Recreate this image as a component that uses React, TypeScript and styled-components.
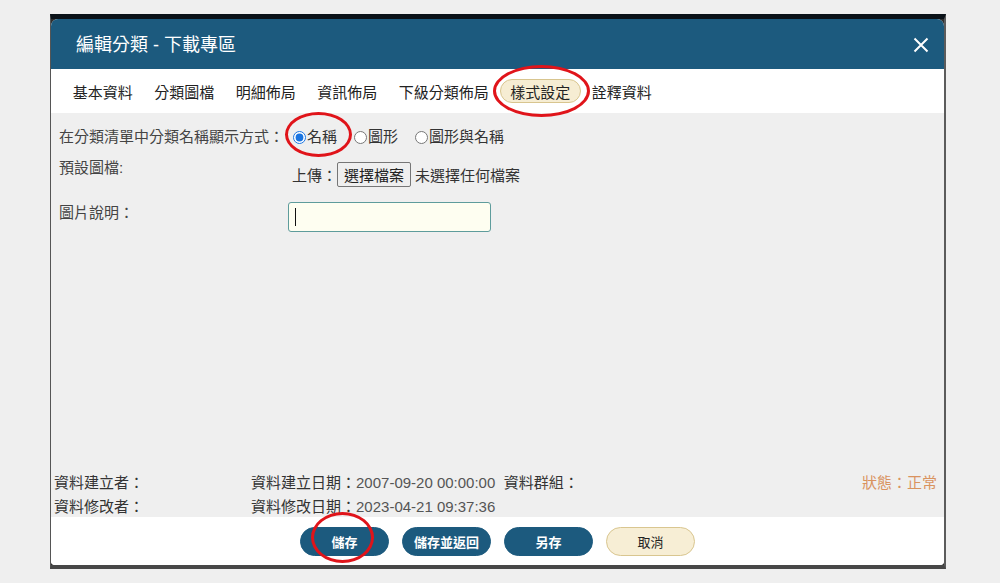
import { FC } from 'react';
import styled, { createGlobalStyle } from 'styled-components';

const tabs = ['基本資料', '分類圖檔', '明細佈局', '資訊佈局', '下級分類佈局', '樣式設定', '詮釋資料'];
const activeTab = '樣式設定';

const displayOptions = [
  { id: 'name', label: '名稱', checked: true },
  { id: 'image', label: '圖形', checked: false },
  { id: 'both', label: '圖形與名稱', checked: false },
];

const GlobalStyle = createGlobalStyle`
  html, body {
    margin: 0;
    padding: 0;
    background: #efefef;
  }
  body {
    font-family: 'Liberation Sans', 'Noto Sans CJK TC', sans-serif;
    color: #333;
  }
`;

const Page = styled.div`
  position: relative;
  box-sizing: border-box;
  width: 1000px;
  height: 583px;
  padding: 14px 0 0 50px;
`;

const Frame = styled.div`
  box-sizing: border-box;
  width: 896px;
  height: 555px;
  display: flex;
  flex-direction: column;
  background: #2f2f2f;
  border-top: 5px solid #0b1218;
  border-left: 1px solid #555;
  border-right: 2px solid #5c5c5c;
  border-bottom: 4px solid #474747;
`;

const Dialog = styled.div`
  flex: 1;
  display: flex;
  flex-direction: column;
  overflow: hidden;
  background: #fff;
  border-radius: 7px 7px 4px 4px;
`;

const Header = styled.div`
  height: 49px;
  flex-shrink: 0;
  display: flex;
  align-items: center;
  justify-content: space-between;
  padding: 1px 15px 0 25px;
  background: #1c5a7e;
  color: #fff;
`;

const Title = styled.div`
  font-size: 18px;
  line-height: 24px;
`;

const CloseIcon = styled.svg`
  width: 16px;
  height: 16px;
  display: block;
`;

const TabBar = styled.div`
  height: 44px;
  flex-shrink: 0;
  display: flex;
  align-items: center;
  padding-left: 11px;
  background: #fff;
`;

const Tab = styled.div<{ $active?: boolean }>`
  box-sizing: border-box;
  height: 24px;
  padding: 3px 9.75px 0;
  line-height: 19px;
  font-size: 15px;
  color: #222;
  border-radius: 12px;
  border: 1px solid ${(p) => (p.$active ? '#d8c58f' : 'transparent')};
  background: ${(p) => (p.$active ? '#f6edd3' : 'transparent')};
`;

const Content = styled.div`
  flex: 1;
  display: flex;
  flex-direction: column;
  background: #efefef;
`;

const Form = styled.div`
  padding: 12px 0 0 8px;
`;

const Row = styled.div<{ $top?: number }>`
  display: flex;
  align-items: flex-start;
  margin-top: ${(p) => p.$top ?? 0}px;
`;

const Label = styled.div<{ $lh?: number }>`
  width: 229px;
  flex-shrink: 0;
  font-size: 15px;
  line-height: ${(p) => p.$lh ?? 24}px;
  color: #444;
`;

const RadioGroup = styled.div`
  display: flex;
  align-items: center;
  height: 24px;
`;

const RadioOption = styled.label`
  display: inline-flex;
  align-items: center;
  height: 24px;
  line-height: 24px;
  margin-right: 12px;
  font-size: 15px;
  color: #333;
`;

const Radio = styled.input`
  width: 13px;
  height: 13px;
  margin: 0 1px 0 5px;
  accent-color: #1a74e0;
`;

const Upload = styled.div`
  display: flex;
  align-items: center;
  padding: 4px 0 0 4px;
  font-size: 15px;
  color: #333;
`;

const FileButton = styled.button`
  box-sizing: border-box;
  height: 25px;
  margin: 0 4px 0 0;
  padding: 0 6px;
  font-family: inherit;
  font-size: 15px;
  color: #222;
  background: #efefef;
  border: 1px solid #767676;
  border-radius: 2px;
`;

const InputWrap = styled.div`
  position: relative;
`;

const TextInput = styled.input`
  box-sizing: border-box;
  width: 203px;
  height: 30px;
  background: #fefef1;
  border: 1px solid #5e9c9c;
  border-radius: 3px;
  outline: none;
`;

const Caret = styled.span`
  position: absolute;
  left: 7px;
  top: 6px;
  width: 1px;
  height: 18px;
  background: #111;
`;

const Info = styled.div`
  margin-top: auto;
  padding: 0 7px 0 3px;
`;

const InfoRow = styled.div`
  height: 24px;
  display: flex;
  align-items: center;
  font-size: 15px;
`;

const InfoCell = styled.div<{ $width?: number }>`
  width: ${(p) => (p.$width ? `${p.$width}px` : 'auto')};
  flex-shrink: 0;
  color: #333;
  white-space: pre;
`;

const Value = styled.span`
  color: #555;
`;

const Status = styled.div`
  margin-left: auto;
  color: #d9935f;
`;

const Footer = styled.div`
  height: 48px;
  flex-shrink: 0;
  display: flex;
  align-items: center;
  justify-content: center;
  gap: 13px;
  background: #fff;
`;

const ActionButton = styled.button<{ $variant?: 'primary' | 'cancel' }>`
  box-sizing: border-box;
  width: 89px;
  height: 29px;
  border-radius: 15px;
  font-family: 'Noto Sans CJK TC', sans-serif;
  font-size: 13px;
  font-weight: ${(p) => (p.$variant === 'cancel' ? 400 : 700)};
  color: ${(p) => (p.$variant === 'cancel' ? '#222' : '#fff')};
  background: ${(p) => (p.$variant === 'cancel' ? '#f7eed5' : '#1c5a7e')};
  border: 1px solid ${(p) => (p.$variant === 'cancel' ? '#d9c690' : '#1c5a7e')};
`;

const Mark = styled.div<{ $x: number; $y: number; $w: number; $h: number }>`
  position: absolute;
  left: ${(p) => p.$x}px;
  top: ${(p) => p.$y}px;
  width: ${(p) => p.$w}px;
  height: ${(p) => p.$h}px;
  box-sizing: border-box;
  border: 3px solid #e0141a;
  border-radius: 50%;
  pointer-events: none;
`;

const App: FC = () => {
  return (
    <Page>
      <GlobalStyle />
      <Frame>
        <Dialog>
          <Header>
            <Title>編輯分類 - 下載專區</Title>
            <CloseIcon viewBox="0 0 16 16">
              <path d="M1.5 1.5 L14.5 14.5 M14.5 1.5 L1.5 14.5" stroke="#fff" strokeWidth="2" fill="none" />
            </CloseIcon>
          </Header>
          <TabBar>
            {tabs.map((t) => (
              <Tab key={t} $active={t === activeTab}>
                {t}
              </Tab>
            ))}
          </TabBar>
          <Content>
            <Form>
              <Row>
                <Label>在分類清單中分類名稱顯示方式：</Label>
                <RadioGroup>
                  {displayOptions.map((o) => (
                    <RadioOption key={o.id}>
                      <Radio type="radio" name="display" defaultChecked={o.checked} />
                      {o.label}
                    </RadioOption>
                  ))}
                </RadioGroup>
              </Row>
              <Row $top={9}>
                <Label $lh={20}>預設圖檔:</Label>
                <Upload>
                  上傳：<FileButton>選擇檔案</FileButton>未選擇任何檔案
                </Upload>
              </Row>
              <Row $top={15}>
                <Label $lh={22}>圖片說明：</Label>
                <InputWrap>
                  <TextInput type="text" />
                  <Caret />
                </InputWrap>
              </Row>
            </Form>
            <Info>
              <InfoRow>
                <InfoCell $width={197}>資料建立者：</InfoCell>
                <InfoCell>
                  資料建立日期：<Value>2007-09-20 00:00:00</Value>  資料群組：
                </InfoCell>
                <Status>狀態：正常</Status>
              </InfoRow>
              <InfoRow>
                <InfoCell $width={197}>資料修改者：</InfoCell>
                <InfoCell>
                  資料修改日期：<Value>2023-04-21 09:37:36</Value>
                </InfoCell>
              </InfoRow>
            </Info>
          </Content>
          <Footer>
            <ActionButton $variant="primary">儲存</ActionButton>
            <ActionButton $variant="primary">儲存並返回</ActionButton>
            <ActionButton $variant="primary">另存</ActionButton>
            <ActionButton $variant="cancel">取消</ActionButton>
          </Footer>
        </Dialog>
      </Frame>
      <Mark $x={493} $y={65} $w={97} $h={52} />
      <Mark $x={285} $y={112} $w={67} $h={45} />
      <Mark $x={311} $y={512} $w={63} $h={51} />
    </Page>
  );
};

export default App;
